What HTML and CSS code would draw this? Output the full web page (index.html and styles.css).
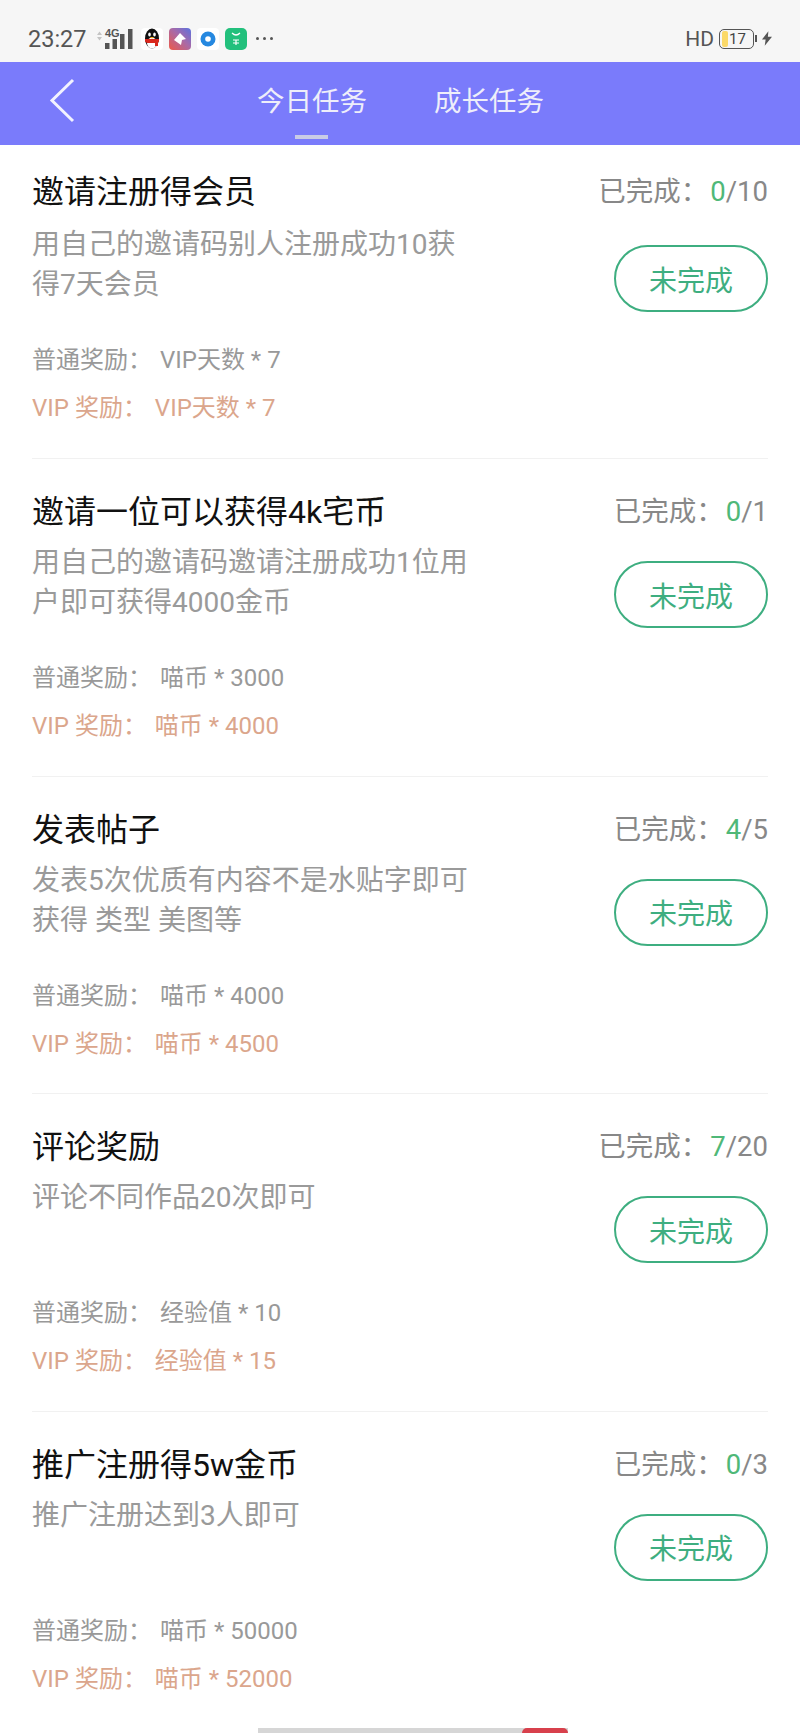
FILE: index.html
```html
<!DOCTYPE html>
<html lang="zh">
<head>
    <meta charset="UTF-8">
    <meta name="viewport" content="width=device-width, initial-scale=1.0">
    <title>今日任务</title>
    <link rel="stylesheet" href="styles.css">
</head>
<body>

    <div class="status-bar">
        <div class="status-left">
            <span class="clock">23:27</span>
            <svg class="signal" width="36" height="24" viewBox="0 0 36 24">
                <path d="M0 8l2.500-3.500L5 8zM0 10l2.500 3.500L5 10z" fill="#c4c4c4"/>
                <text x="8" y="10" class="signal-label">4G</text>
                <rect x="8" y="16" width="4.500" height="6" fill="#555"/>
                <rect x="15.500" y="12" width="4.500" height="10" fill="#555"/>
                <rect x="23" y="7" width="4.500" height="15" fill="#555"/>
                <rect x="31" y="2" width="4.500" height="20" fill="#555"/>
            </svg>
            <svg class="app-icon" width="22" height="22" viewBox="0 0 22 22">
                <rect width="22" height="22" rx="4" fill="#fff"/>
                <ellipse cx="11" cy="10.500" rx="7" ry="10" fill="#111"/>
                <ellipse cx="11" cy="15" rx="5" ry="5.500" fill="#fff"/>
                <ellipse cx="8.500" cy="6.500" rx="1.300" ry="2" fill="#fff"/>
                <ellipse cx="13.500" cy="6.500" rx="1.300" ry="2" fill="#fff"/>
                <path d="M8.500 9h5l-2.500 1.500z" fill="#f0b020"/>
                <path d="M4 11h14v2.500l-2 1.500H6l-2-1.500z" fill="#d9281e"/>
                <rect x="14" y="13" width="3" height="5" fill="#d9281e"/>
            </svg>
            <svg class="app-icon" width="22" height="22" viewBox="0 0 22 22">
                <defs>
                    <linearGradient id="kite" x1="0" y1="1" x2="1" y2="0">
                        <stop offset="0" stop-color="#ee5a48"/>
                        <stop offset="0.55" stop-color="#a86aa8"/>
                        <stop offset="1" stop-color="#5a72e0"/>
                    </linearGradient>
                </defs>
                <rect width="22" height="22" rx="4" fill="url(#kite)"/>
                <path d="M5 12l6-7 6 6-4 1-1 5z" fill="#fff"/>
            </svg>
            <svg class="app-icon" width="22" height="22" viewBox="0 0 22 22">
                <rect width="22" height="22" rx="4" fill="#fff"/>
                <circle cx="11" cy="11" r="7.500" fill="#2588e0"/>
                <circle cx="11" cy="11" r="2.800" fill="#fff"/>
            </svg>
            <svg class="app-icon" width="22" height="22" viewBox="0 0 22 22">
                <rect width="22" height="22" rx="5" fill="#22c07c"/>
                <path d="M7 5q4 4 8 0" fill="none" stroke="#fff" stroke-width="1.200"/>
                <path d="M8 12h6M8 15h6M11 12v5" fill="none" stroke="#fff" stroke-width="1.200"/>
            </svg>
            <span class="more-dots"><i></i><i></i><i></i></span>
        </div>
        <div class="status-right">
            <span class="hd">HD</span>
            <span class="battery"><span class="battery-fill"></span><span class="battery-num">17</span></span>
            <svg class="bolt" width="10" height="15" viewBox="0 0 11 16">
                <path d="M7 0L0 9h4l-1 7 8-10H6.500z" fill="#555"/>
            </svg>
        </div>
    </div>

    <header class="top-bar">
        <svg class="back" width="26" height="46" viewBox="0 0 26 46">
            <path d="M24 2L3 22.500 24 43" fill="none" stroke="#f2f2ff" stroke-width="3"/>
        </svg>
        <nav class="tabs">
            <a class="tab active">今日任务</a>
            <a class="tab">成长任务</a>
        </nav>
    </header>

    <main class="task-list">
        <section class="task">
            <div class="task-info">
                <h3>邀请注册得会员</h3>
                <p class="desc">用自己的邀请码别人注册成功10获得7天会员</p>
                <p class="reward">普通奖励： <span>VIP天数 * 7</span></p>
                <p class="reward vip">VIP 奖励： <span>VIP天数 * 7</span></p>
            </div>
            <div class="task-side">
                <p class="progress">已完成：<b>0</b>/10</p>
                <button class="state-button">未完成</button>
            </div>
        </section>
        <section class="task">
            <div class="task-info">
                <h3>邀请一位可以获得4k宅币</h3>
                <p class="desc">用自己的邀请码邀请注册成功1位用户即可获得4000金币</p>
                <p class="reward">普通奖励： <span>喵币 * 3000</span></p>
                <p class="reward vip">VIP 奖励： <span>喵币 * 4000</span></p>
            </div>
            <div class="task-side">
                <p class="progress">已完成：<b>0</b>/1</p>
                <button class="state-button">未完成</button>
            </div>
        </section>
        <section class="task">
            <div class="task-info">
                <h3>发表帖子</h3>
                <p class="desc">发表5次优质有内容不是水贴字即可获得 类型 美图等</p>
                <p class="reward">普通奖励： <span>喵币 * 4000</span></p>
                <p class="reward vip">VIP 奖励： <span>喵币 * 4500</span></p>
            </div>
            <div class="task-side">
                <p class="progress">已完成：<b>4</b>/5</p>
                <button class="state-button">未完成</button>
            </div>
        </section>
        <section class="task">
            <div class="task-info">
                <h3>评论奖励</h3>
                <p class="desc">评论不同作品20次即可</p>
                <p class="reward">普通奖励： <span>经验值 * 10</span></p>
                <p class="reward vip">VIP 奖励： <span>经验值 * 15</span></p>
            </div>
            <div class="task-side">
                <p class="progress">已完成：<b>7</b>/20</p>
                <button class="state-button">未完成</button>
            </div>
        </section>
        <section class="task">
            <div class="task-info">
                <h3>推广注册得5w金币</h3>
                <p class="desc">推广注册达到3人即可</p>
                <p class="reward">普通奖励： <span>喵币 * 50000</span></p>
                <p class="reward vip">VIP 奖励： <span>喵币 * 52000</span></p>
            </div>
            <div class="task-side">
                <p class="progress">已完成：<b>0</b>/3</p>
                <button class="state-button">未完成</button>
            </div>
        </section>
    </main>

    <div class="peek-bar"><span class="peek-red"></span></div>

</body>
</html>
```

FILE: styles.css
```css
* {
    box-sizing: border-box;
}
html, body {
    height: 100%;
}
body {
    font-family: "Roboto", "Noto Sans CJK SC", sans-serif;
    margin: 0;
    padding: 0;
    background-color: #fff;
    overflow: hidden;
    display: flex;
    flex-direction: column;
}
p, h3 {
    margin: 0;
}

.status-bar {
    height: 62px;
    background-color: #f6f6f6;
    display: flex;
    justify-content: space-between;
    align-items: center;
    padding: 15px 28px 0 28px;
    color: #555;
}
.status-left, .status-right {
    display: flex;
    align-items: center;
}
.clock {
    font-size: 23.5px;
    margin-right: 10px;
}
.signal {
    margin-right: 8px;
}
.signal-label {
    font-family: "Liberation Sans", sans-serif;
    font-size: 11px;
    font-weight: bold;
    fill: #555;
}
.app-icon {
    margin-right: 6px;
}
.more-dots {
    display: flex;
    gap: 4px;
    margin-left: 3px;
}
.more-dots i {
    width: 3px;
    height: 3px;
    border-radius: 50%;
    background-color: #555;
}
.hd {
    font-size: 21px;
    margin-right: 5px;
}
.battery {
    width: 35px;
    height: 20px;
    border: 1.5px solid #555;
    border-radius: 5px;
    position: relative;
    display: flex;
    align-items: center;
    padding-left: 9px;
    margin-right: 8px;
}
.battery::after {
    content: "";
    position: absolute;
    right: -4px;
    top: 5px;
    width: 2px;
    height: 7px;
    background-color: #555;
}
.battery-fill {
    position: absolute;
    left: 2px;
    top: 1px;
    bottom: 1px;
    width: 6px;
    border-radius: 2px;
    background-color: #fbd968;
}
.battery-num {
    font-size: 15px;
    color: #444;
}

.top-bar {
    height: 83px;
    background-color: #7a7bfb;
    position: relative;
    display: flex;
    justify-content: center;
}
.back {
    position: absolute;
    left: 49px;
    top: 16px;
}
.tabs {
    display: flex;
    gap: 67px;
    padding-left: 1px;
}
.tab {
    color: #eeeefa;
    font-size: 27.5px;
    line-height: 79px;
    position: relative;
    height: 83px;
}
.tab.active::after {
    content: "";
    position: absolute;
    left: 38px;
    bottom: 6px;
    width: 33px;
    height: 4px;
    background-color: #c9cbe6;
}

.task-list {
    flex: 1;
    padding: 0 32px;
}
.task {
    height: 317.5px;
    padding-top: 31px;
    border-bottom: 1px solid #f1f1f1;
    display: flex;
    justify-content: space-between;
}
.task:first-child {
    height: 314px;
    padding-top: 25px;
}
.task:first-child .desc {
    margin-top: 11px;
}
.task:first-child .state-button {
    margin-top: 31px;
}
.task:last-child {
    border-bottom: none;
}
.task-info {
    width: 440px;
    display: flex;
    flex-direction: column;
}
.task-info h3 {
    font-size: 32px;
    font-weight: normal;
    line-height: 44px;
    color: #111;
}
.desc {
    font-size: 28px;
    line-height: 40px;
    height: 80px;
    margin-top: 9px;
    color: #9a9a9a;
}
.reward {
    font-size: 24px;
    line-height: 36px;
    margin-top: 37px;
    color: #999;
    white-space: pre;
}
.reward span {
    margin-left: 2px;
}
.reward.vip {
    margin-top: 12px;
    color: #dba68c;
}
.task-side {
    display: flex;
    flex-direction: column;
    align-items: flex-end;
}
.progress {
    font-size: 27.5px;
    line-height: 44px;
    color: #888;
}
.progress b {
    font-weight: normal;
    color: #4fb878;
    margin-left: 2px;
}
.state-button {
    width: 154px;
    height: 67px;
    margin-top: 27px;
    background-color: #fff;
    border: 2px solid #3eae80;
    border-radius: 34px;
    color: #3eae80;
    font-family: inherit;
    font-size: 28px;
    padding: 0;
}

.peek-bar {
    position: absolute;
    left: 258px;
    bottom: 0;
    width: 310px;
    height: 5px;
    background-color: #d6d6d6;
}
.peek-red {
    position: absolute;
    right: 0;
    top: 0;
    width: 46px;
    height: 5px;
    border-radius: 8px 8px 0 0;
    background-color: #d8404c;
}
```
